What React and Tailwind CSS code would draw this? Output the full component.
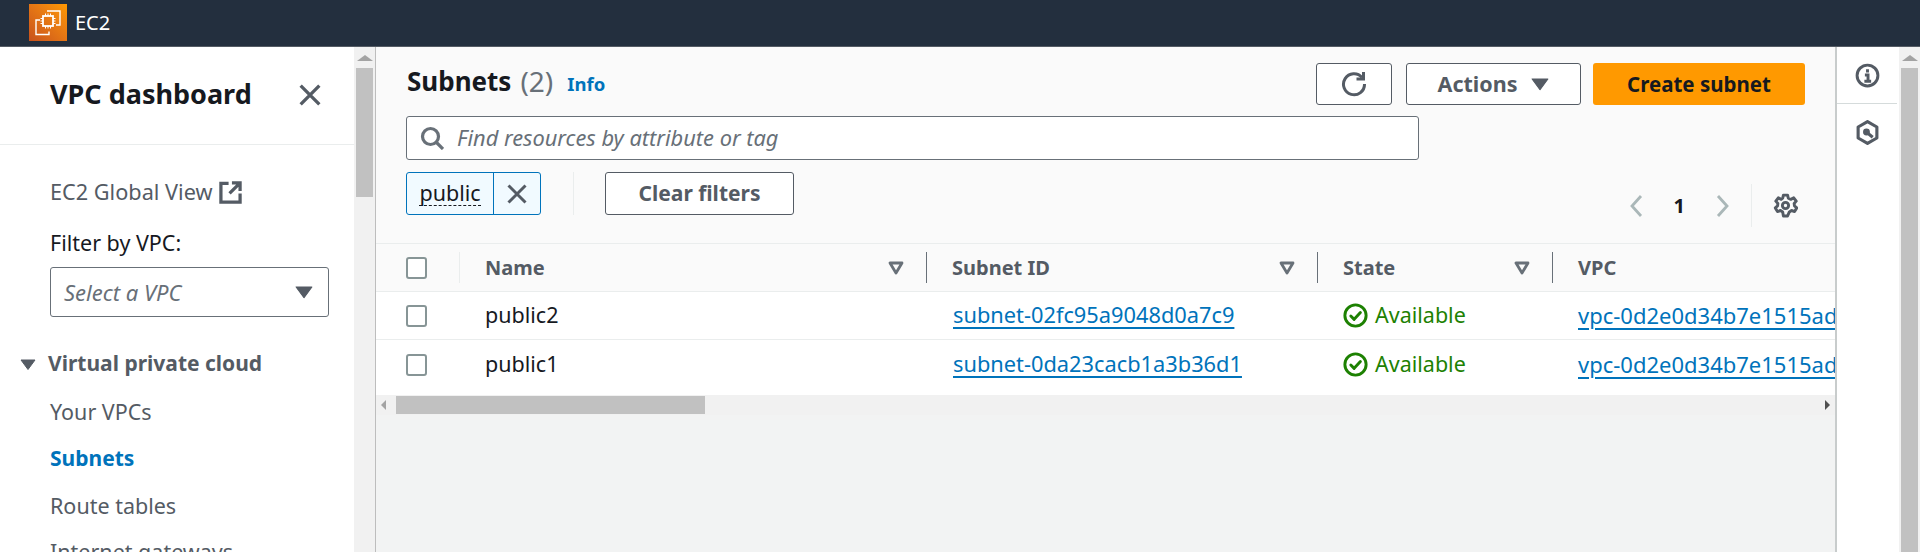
import React from 'react';

const FONT = "font-['Noto_Sans',sans-serif]";

const Caret = ({ className = '' }) => (
  <svg viewBox="0 0 16 12" className={className} fill="currentColor">
    <path d="M1 1.500h14L8 11z" stroke="currentColor" strokeWidth="1" strokeLinejoin="round" />
  </svg>
);

const SortIcon = () => (
  <svg viewBox="0 0 16 14" className="w-[16px] h-[14px] text-[#687078]" fill="none" stroke="currentColor" strokeWidth="2.800">
    <path d="M2 2h12L8 12z" strokeLinejoin="round" />
  </svg>
);

const CloseIcon = ({ className = '' }) => (
  <svg viewBox="0 0 20 20" className={className} fill="none" stroke="currentColor" strokeWidth="3">
    <path d="M1.500 1.500l17 17M18.500 1.500l-17 17" />
  </svg>
);

const Ec2Logo = () => (
  <div className="w-[38px] h-[37px] bg-gradient-to-tr from-[#c8511b] to-[#ff9900] flex items-center justify-center">
    <svg viewBox="0 0 38 37" className="w-[38px] h-[37px]" fill="none" stroke="#fff" strokeWidth="1.400">
      <path d="M18 7h13v14h-4M11 16H7v14.500h13v-3" />
      <rect x="14" y="12" width="10" height="10" strokeWidth="1.800" />
      <path d="M16.500 9.500V12M19 9.500V12M21.500 9.500V12M16.500 22V24.500M19 22V24.500M21.500 22V24.500M11.500 14.500H14M11.500 17H14M11.500 19.500H14M24 14.500h2.500M24 17h2.500M24 19.500h2.500" strokeWidth="1" />
    </svg>
  </div>
);

const Checkbox = () => (
  <div className="w-[21px] h-[22px] rounded-[3px] border-2 border-[#879596] bg-white" />
);

const SortHeader = ({ label, width }) => (
  <div className={`${width} h-full flex items-center justify-between pl-[25px] pr-[23px] relative`}>
    <span className="text-[20px] font-bold text-[#545b64]">{label}</span>
    <SortIcon />
    <span className="absolute right-0 top-[8px] bottom-[8px] w-px bg-[#687078]" />
  </div>
);

const CheckCircle = () => (
  <svg viewBox="0 0 24 24" className="w-[25px] h-[25px] shrink-0" fill="none" stroke="#1d8102" strokeWidth="2.800">
    <circle cx="12" cy="12" r="10.200" />
    <path d="M7.500 12.500l3.200 3.200 6-6.500" strokeLinecap="round" strokeLinejoin="round" />
  </svg>
);

const rows = [
  { name: 'public2', subnet: 'subnet-02fc95a9048d0a7c9', h: 'h-[48px]' },
  { name: 'public1', subnet: 'subnet-0da23cacb1a3b36d1', h: 'h-[55px] pb-[6px]' },
];

export default function App() {
  return (
    <div className={`h-[552px] w-[1920px] overflow-hidden flex flex-col ${FONT}`}>
      {/* Top bar */}
      <div className="h-[47px] shrink-0 bg-[#232f3e] border-b border-[#545b64] flex items-center pl-[29px] pb-px">
        <Ec2Logo />
        <span className="ml-[8px] text-[20px] text-white">EC2</span>
      </div>

      <div className="flex-1 flex min-h-0">
        {/* Sidebar */}
        <div className="w-[354px] shrink-0 bg-white overflow-hidden">
          <div className="h-[98px] border-b border-[#eaeded] flex items-center justify-between pl-[50px] pr-[33px] pb-[2px]">
            <h2 className="text-[27px] font-bold text-[#16191f]">VPC dashboard</h2>
            <CloseIcon className="w-[22px] h-[22px] text-[#545b64]" />
          </div>
          <div className="pl-[50px] pr-[25px]">
            <div className="mt-[32px] h-[30px] flex items-center gap-[6px] text-[21.700px] text-[#545b64]">
              <span>EC2 Global View</span>
              <svg viewBox="0 0 24 24" className="w-[23px] h-[23px]" fill="none" stroke="#545b64" strokeWidth="3.400">
                <path d="M10 2.500H2v19.500h20v-9M13.500 2H22v8.500M22 2L11 13" />
              </svg>
            </div>
            <div className="mt-[21px] h-[30px] flex items-center text-[21.500px] text-[#16191f]">Filter by VPC:</div>
            <div className="mt-[9px] w-[279px] h-[50px] rounded-[3px] border border-[#687078] flex items-center justify-between pl-[13px] pr-[15px]">
              <span className="text-[22px] italic text-[#687078]">Select a VPC</span>
              <Caret className="w-[18px] h-[14px] text-[#545b64]" />
            </div>
          </div>
          <div className="mt-[32px] pl-[20px] flex items-center h-[30px] gap-[12px]">
            <Caret className="w-[16px] h-[13px] text-[#545b64]" />
            <span className="text-[21px] font-bold text-[#545b64]">Virtual private cloud</span>
          </div>
          <div className="pl-[50px] text-[21.500px] text-[#545b64]">
            <div className="mt-[18px] h-[30px] flex items-center">Your VPCs</div>
            <div className="mt-[17px] h-[30px] flex items-center font-bold text-[21px] text-[#0073bb]">Subnets</div>
            <div className="mt-[17px] h-[30px] flex items-center">Route tables</div>
            <div className="mt-[16px] h-[30px] flex items-center">Internet gateways</div>
          </div>
        </div>

        {/* Sidebar scrollbar */}
        <div className="w-[22px] shrink-0 bg-[#f1f1f1] border-r border-[#bdbdbd] flex flex-col items-center">
          <div className="h-[21px] flex items-center">
            <div className="w-0 h-0 border-l-[8px] border-r-[8px] border-b-[6px] border-l-transparent border-r-transparent border-b-[#a3a3a3]" />
          </div>
          <div className="w-[17px] h-[129px] bg-[#c1c1c1]" />
        </div>

        {/* Main */}
        <div className="w-[1459px] shrink-0 bg-[#f2f3f3] flex flex-col overflow-hidden">
          <div className="bg-[#fafafa] h-[197px] shrink-0 border-b border-[#eaeded] pl-[30px] pr-[30px]">
            <div className="flex items-start justify-between pt-[17px] h-[69px]">
              <div className="flex items-center h-[28px] mt-[3px] ml-px">
                <span className="text-[26px] font-bold text-[#16191f]">Subnets</span>
                <span className="ml-[9px] text-[28px] text-[#687078]">(2)</span>
                <span className="ml-[14px] text-[18.500px] font-bold text-[#0073bb] pt-[5px]">Info</span>
              </div>
              <div className="flex items-center mt-[-1px]">
                <div className="w-[76px] h-[42px] bg-white border border-[#545b64] rounded-[3px] flex items-center justify-center">
                  <svg viewBox="0 0 26 26" className="w-[26px] h-[26px]" fill="none" stroke="#545b64" strokeWidth="3">
                    <path d="M21 6.500A10.500 10.500 0 1 0 23.500 13" />
                    <path d="M22.500 1v7h-7" />
                  </svg>
                </div>
                <div className="ml-[14px] w-[175px] h-[42px] bg-white border border-[#545b64] rounded-[3px] flex items-center justify-center gap-[14px]">
                  <span className="text-[21.500px] font-bold text-[#545b64]">Actions</span>
                  <Caret className="w-[18px] h-[14px] text-[#545b64]" />
                </div>
                <div className="ml-[12px] w-[212px] h-[42px] bg-[#ff9900] rounded-[3px] flex items-center justify-center text-[20.500px] font-bold text-[#16191f]">
                  Create subnet
                </div>
              </div>
            </div>
            <div className="w-[1013px] h-[44px] bg-white border border-[#687078] rounded-[3px] flex items-center pl-[13px] gap-[13px]">
              <svg viewBox="0 0 24 24" className="w-[24px] h-[24px]" fill="none" stroke="#687078" strokeWidth="3.200">
                <circle cx="10.500" cy="10.500" r="8" />
                <path d="M16 16l7 7" />
              </svg>
              <span className="text-[21.800px] italic text-[#687078]">Find resources by attribute or tag</span>
            </div>
            <div className="flex items-start mt-[12px]">
              <div className="h-[43px] w-[135px] rounded-[3px] border border-[#0073bb] bg-[#f1faff] flex">
                <div className="w-[87px] flex items-center justify-center border-r border-[#0073bb]">
                  <span className="text-[21.500px] leading-[24px] text-[#16191f] border-b border-dashed border-[#16191f]">public</span>
                </div>
                <div className="flex-1 flex items-center justify-center">
                  <CloseIcon className="w-[20px] h-[20px] text-[#545b64]" />
                </div>
              </div>
              <div className="w-px h-[43px] bg-[#eaeded] ml-[32px]" />
              <div className="ml-[31px] w-[189px] h-[43px] bg-white border border-[#545b64] rounded-[3px] flex items-center justify-center text-[21px] font-bold text-[#545b64]">
                Clear filters
              </div>
              <div className="ml-auto flex items-center h-[43px] mt-[12px] pr-[8px]">
                <svg viewBox="0 0 14 24" className="w-[14px] h-[24px] mr-[31px]" fill="none" stroke="#aab7b8" strokeWidth="2.800">
                  <path d="M12 2L3 12l9 10" />
                </svg>
                <span className="text-[20px] font-bold text-[#16191f]">1</span>
                <svg viewBox="0 0 14 24" className="w-[14px] h-[24px] ml-[31px]" fill="none" stroke="#aab7b8" strokeWidth="2.800">
                  <path d="M2 2l9 10-9 10" />
                </svg>
                <div className="w-px h-[43px] bg-[#eaeded] ml-[21px] mr-[21px]" />
                <svg viewBox="0 0 24 24" className="w-[25px] h-[25px] mr-[-1px]" fill="none" stroke="#545b64" strokeWidth="2.800" strokeLinejoin="round">
                  <path d="M10 2h4l.700 3 2.400 1.100 2.800-1.500 2.400 3.200-2 2.200.300 2.400 2.200 1.900-2.100 3.500-2.900-1-2.100 1.400L14 22h-4l-.700-3.800-2.100-1.400-2.900 1-2.100-3.500 2.200-1.900.300-2.400-2-2.200 2.400-3.200 2.800 1.500L9.300 5z" />
                  <circle cx="12" cy="12" r="3" />
                </svg>
              </div>
            </div>
          </div>

          {/* Table */}
          <div className="bg-[#fafafa] h-[48px] shrink-0 border-b border-[#eaeded] flex items-center">
            <div className="w-[84px] h-full flex items-center pl-[30px] relative">
              <Checkbox />
              <span className="absolute right-0 top-[8px] bottom-[8px] w-px bg-[#eaeded]" />
            </div>
            <SortHeader label="Name" width="w-[467px]" />
            <SortHeader label="Subnet ID" width="w-[391px]" />
            <SortHeader label="State" width="w-[235px]" />
            <div className="pl-[25px] text-[20px] font-bold text-[#545b64]">VPC</div>
          </div>
          {rows.map((r, i) => (
            <div key={r.name} className={`bg-white ${r.h} shrink-0 flex items-center text-[21.500px] ${i === 0 ? 'border-b border-[#eaeded]' : ''}`}>
              <div className="w-[84px] pl-[30px]"><Checkbox /></div>
              <div className="w-[467px] pl-[25px] text-[#16191f]">{r.name}</div>
              <div className="w-[391px] pl-[26px]">
                <span className="text-[21.800px] text-[#0073bb] underline decoration-2 underline-offset-[4px]">{r.subnet}</span>
              </div>
              <div className="w-[235px] pl-[25px] flex items-center gap-[7px] text-[#1d8102]">
                <CheckCircle />
                <span>Available</span>
              </div>
              <div className="flex-1 pl-[25px] whitespace-nowrap overflow-hidden">
                <span className="text-[22px] text-[#0073bb] underline decoration-2 underline-offset-[4px]">vpc-0d2e0d34b7e1515ad</span>
              </div>
            </div>
          ))}
          {/* Horizontal scrollbar */}
          <div className="h-[20px] shrink-0 bg-[#f1f1f1] flex items-center justify-between pl-[5px] pr-[5px]">
            <div className="flex items-center">
              <div className="w-0 h-0 border-t-[5px] border-b-[5px] border-r-[5px] border-t-transparent border-b-transparent border-r-[#a3a3a3]" />
              <div className="ml-[10px] w-[309px] h-[18px] bg-[#c1c1c1]" />
            </div>
            <div className="w-0 h-0 border-t-[5px] border-b-[5px] border-l-[5px] border-t-transparent border-b-transparent border-l-[#505050]" />
          </div>
        </div>

        {/* Right rail */}
        <div className="w-[64px] shrink-0 bg-white border-l-2 border-[#c8cccc] pr-[2px]">
          <div className="h-[57px] border-b border-[#d5dbdb] flex items-center justify-center">
            <svg viewBox="0 0 24 24" className="w-[25px] h-[25px]" fill="none" stroke="#545b64" strokeWidth="2.800">
              <circle cx="12" cy="12" r="10" />
              <path d="M12 6v3M9.500 11.500H12.500V17M9 17.500h6.500" />
            </svg>
          </div>
          <div className="h-[56px] flex items-center justify-center">
            <svg viewBox="0 0 24 24" className="w-[25px] h-[25px]" fill="none" stroke="#545b64" strokeWidth="3" strokeLinejoin="round">
              <path d="M12 1.500l9 5.200v10.600l-9 5.200-9-5.200V6.700z" />
              <path d="M17 16.500l-5-4" />
              <circle cx="11" cy="11.500" r="1.800" fill="#545b64" />
            </svg>
          </div>
        </div>

        {/* Page scrollbar */}
        <div className="w-[21px] shrink-0 bg-[#f1f1f1] flex flex-col items-center">
          <div className="h-[21px] flex items-center">
            <div className="w-0 h-0 border-l-[8px] border-r-[8px] border-b-[6px] border-l-transparent border-r-transparent border-b-[#a3a3a3]" />
          </div>
          <div className="w-[17px] flex-1 bg-[#c1c1c1]" />
        </div>
      </div>
    </div>
  );
}
